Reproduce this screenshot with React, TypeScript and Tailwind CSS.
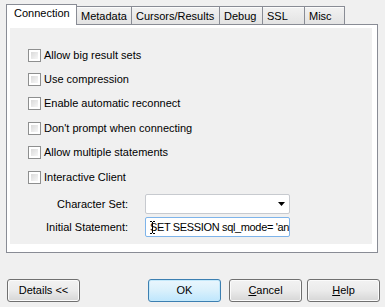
import React from 'react';

const font = { fontFamily: '"Liberation Sans", Arial, sans-serif' };

const options = [
  'Allow big result sets',
  'Use compression',
  'Enable automatic reconnect',
  "Don't prompt when connecting",
  'Allow multiple statements',
  'Interactive Client',
];

// gaps between checkbox rows (the original spacing is not perfectly even)
const rowGaps = ['mt-0', 'mt-[11px]', 'mt-[11px]', 'mt-[12px]', 'mt-[11px]', 'mt-[12px]'];

const tabs = ['Metadata', 'Cursors/Results', 'Debug', 'SSL', 'Misc'];
const tabWidths = ['w-[56px]', 'w-[89px]', 'w-[44px]', 'w-[43px]', 'w-[41px]'];

const Checkbox: React.FC<{ label: string; className: string }> = ({ label, className }) => (
  <label className={`flex items-center h-[13px] ${className}`}>
    <span className="w-[13px] h-[13px] border border-[#8e8f8f] bg-white p-[2px] shrink-0">
      <span className="block w-full h-full bg-gradient-to-br from-[#dadada] to-[#f7f7f7]" />
    </span>
    <span className="ml-[3px] text-[11px] text-black leading-none whitespace-nowrap">{label}</span>
  </label>
);

const Button: React.FC<{ children: React.ReactNode; primary?: boolean; className?: string }> = ({
  children,
  primary,
  className = '',
}) => (
  <button
    className={`w-[73px] h-[23px] rounded-[3px] border text-[11px] text-black flex items-center justify-center ${
      primary
        ? 'border-[#3c7fb1] bg-gradient-to-b from-[#eaf6fd] via-[#d9f0fc] to-[#bee6fd] shadow-[inset_0_0_0_1px_#c4e9fb]'
        : 'border-[#707070] bg-gradient-to-b from-[#f2f2f2] via-[#ebebeb] to-[#d6d6d6] shadow-[inset_0_0_0_1px_#fbfbfb]'
    } ${className}`}
  >
    {children}
  </button>
);

const App: React.FC = () => {
  return (
    <div className="w-[385px] h-[307px] bg-[#f0f0f0] overflow-hidden" style={font}>
      {/* tab strip */}
      <div className="flex items-end pt-[4px] pl-[6px] h-[24px] relative z-10">
        <div className="w-[71px] h-[21px] -mb-px bg-white border border-b-0 border-[#898c95] text-[11px] pl-[7px] pt-[3px] leading-none">
          Connection
        </div>
        {tabs.map((t, i) => (
          <div
            key={t}
            className={`${tabWidths[i]} h-[18px] -ml-px border border-b-0 border-[#898c95] bg-gradient-to-b from-[#f2f2f2] to-[#e3e3e3] shadow-[inset_0_1px_0_0_#fcfcfc] text-[11px] leading-none pl-[4px] pt-[4px] first:ml-0`}
          >
            {t}
          </div>
        ))}
      </div>

      {/* panel */}
      <div className="ml-[6px] w-[372px] h-[229px] border border-[#898c95] bg-white pl-[3px] pr-[5px] pt-[3px] pb-[8px]">
        <div className="w-full h-full bg-[#f0f0f0] pl-[18px] pt-[21px]">
          <div className="flex flex-col">
            {options.map((o, i) => (
              <Checkbox key={o} label={o} className={rowGaps[i]} />
            ))}
          </div>

          <div className="flex items-center mt-[10px] -ml-[18px]">
            <span className="w-[118px] text-right text-[11px] text-black">Character Set:</span>
            <div className="ml-[17px] w-[145px] h-[20px] bg-white border border-[#c7cacf] rounded-[2px] flex items-center justify-end pr-[4px]">
              <svg width="7" height="4" viewBox="0 0 7 4">
                <path d="M0 0h7L3.5 4z" fill="#000" />
              </svg>
            </div>
          </div>

          <div className="flex items-center mt-[3px] -ml-[18px]">
            <span className="w-[118px] text-right text-[11px] text-black">Initial Statement:</span>
            <div className="ml-[17px] w-[145px] h-[20px] bg-white border border-[#7eb4ea] rounded-[2px] relative overflow-hidden flex items-center pl-[4px]">
              <span className="text-[11px] text-black whitespace-nowrap leading-none tracking-[-0.35px]">SET SESSION sql_mode= 'an</span>
              <svg className="absolute left-[4px] top-[3px]" width="5" height="13" viewBox="0 0 5 13">
                <path d="M0 0.5h2M3 0.5h2M2.5 1v11M0 12.5h2M3 12.5h2" stroke="#000" strokeWidth="1" fill="none" />
              </svg>
            </div>
          </div>
        </div>
      </div>

      {/* buttons */}
      <div className="flex mt-[26px] pl-[7px]">
        <Button>Details &lt;&lt;</Button>
        <Button primary className="ml-[68px]">OK</Button>
        <Button className="ml-[8px]">
          <span>
            <span className="underline">C</span>ancel
          </span>
        </Button>
        <Button className="ml-[5px]">
          <span>
            <span className="underline">H</span>elp
          </span>
        </Button>
      </div>
    </div>
  );
};

export default App;
